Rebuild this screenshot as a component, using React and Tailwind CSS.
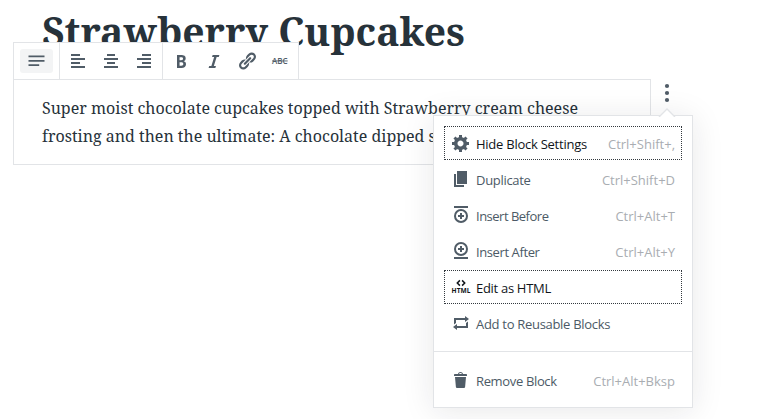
const ICONS = {
  left: 'M12 5V3H3v2h9zm5 4V7H3v2h14zm-5 4v-2H3v2h9zm5 4v-2H3v2h14z',
  center: 'M14 5V3H6v2h8zm3 4V7H3v2h14zm-3 4v-2H6v2h8zm3 4v-2H3v2h14z',
  right: 'M17 5V3H8v2h9zm0 4V7H3v2h14zm0 4v-2H8v2h9zm0 4v-2H3v2h14z',
  bold: 'M6 4v13h4.54c1.37 0 2.46-.33 3.26-1 .8-.66 1.2-1.58 1.2-2.77 0-.84-.17-1.51-.51-2.01s-.9-.85-1.67-1.03v-.09c.57-.1 1.02-.4 1.36-.9s.51-1.13.51-1.91c0-1.14-.39-1.98-1.17-2.5C12.75 4.26 11.5 4 9.78 4H6zm2.57 5.15V6.26h1.36c.73 0 1.27.11 1.61.32.34.22.51.58.51 1.07 0 .54-.16.92-.47 1.15s-.82.35-1.51.35h-1.5zm0 2.19h1.6c1.44 0 2.16.53 2.16 1.61 0 .6-.17 1.05-.51 1.34s-.86.43-1.57.43H8.57v-3.38z',
  italic: 'M14.78 6h-2.13l-2.8 9h2.12l-.62 2H4.6l.62-2h2.14l2.8-9H8.03l.62-2h6.75z',
  link: 'M17.74 2.76c1.68 1.69 1.68 4.41 0 6.1l-1.53 1.52c-1.12 1.12-2.7 1.47-4.14 1.09l2.62-2.61.76-.77.76-.76c.84-.84.84-2.2 0-3.04-.84-.85-2.2-.85-3.04 0l-.77.76-3.38 3.38c-.37-1.44-.02-3.02 1.1-4.14l1.52-1.53c1.69-1.68 4.42-1.68 6.1 0zM8.59 13.43l5.34-5.34c.42-.42.42-1.1 0-1.52-.44-.43-1.13-.39-1.53 0l-5.33 5.34c-.42.42-.42 1.1 0 1.52.44.43 1.13.39 1.52 0zm-.76 2.29l4.14-4.15c.38 1.44.03 3.02-1.09 4.14l-1.52 1.53c-1.69 1.68-4.41 1.68-6.1 0-1.68-1.68-1.68-4.42 0-6.1l1.53-1.52c1.12-1.12 2.7-1.47 4.14-1.1l-4.14 4.15c-.85.84-.85 2.2 0 3.05.84.84 2.2.84 3.04 0z',
  gear: 'M18 12h-2.18c-.17.7-.44 1.35-.81 1.93l1.54 1.54-2.1 2.1-1.54-1.54c-.58.36-1.23.63-1.91.79V19H8v-2.18c-.68-.16-1.33-.43-1.91-.79l-1.54 1.54-2.12-2.12 1.54-1.54c-.36-.58-.63-1.23-.79-1.91H1V9.03h2.17c.16-.7.44-1.35.8-1.94L2.43 5.55l2.1-2.1 1.54 1.54c.58-.37 1.24-.64 1.93-.81V2h3v2.18c.68.16 1.33.43 1.91.79l1.54-1.54 2.12 2.12-1.54 1.54c.36.59.64 1.24.8 1.94H18V12zm-8.5 1.5c1.66 0 3-1.34 3-3s-1.34-3-3-3-3 1.34-3 3 1.34 3 3 3z',
  page: 'M6 15V2h10v13H6zm-1 1h8v2H3V5h2v11z',
  repeat: 'M5 7v3l-2 1.5V5h11V3l4 3.01L14 9V7H5zm10 6v-3l2-1.5V15H6v2l-4-3.01L6 11v2h9z',
  trash: 'M12 4h3c.6 0 1 .4 1 1v1H3V5c0-.6.5-1 1-1h3c.2-1.1 1.3-2 2.5-2s2.3.9 2.5 2zM8 4h3c-.2-.6-.9-1-1.5-1S8.2 3.4 8 4zM4 7h11l-.9 10.1c0 .5-.5.9-1 .9H5.9c-.5 0-.9-.4-1-.9L4 7z',
};

function Icon({ name }) {
  const cls = 'block h-5 w-5 shrink-0 overflow-visible fill-current';
  if (name === 'strike')
    return (
      <svg viewBox="0 0 20 20" className={cls}>
        <text x="2" y="13" textLength="15.6" lengthAdjust="spacingAndGlyphs" className="font-['Open_Sans',sans-serif] text-[8.6px] font-semibold">ABC</text>
        <path d="M2 9.5h15.7v.9H2z" />
      </svg>
    );
  if (name === 'html')
    return (
      <svg viewBox="0 0 20 20" className={cls}>
        <path d="M8.9 3.4 6.3 6l2.6 2.6M11.1 3.4 13.7 6l-2.6 2.6" fill="none" stroke="currentColor" strokeWidth="1.5" />
        <text x="0.6" y="16" textLength="18.8" lengthAdjust="spacingAndGlyphs" className="font-['Open_Sans',sans-serif] text-[7.8px] font-bold">HTML</text>
      </svg>
    );
  if (name === 'before' || name === 'after') {
    const cy = name === 'before' ? 11 : 8;
    return (
      <svg viewBox="0 0 20 20" className={cls}>
        <rect x="3" y={name === 'before' ? 1 : 16} width="14" height="2" />
        <circle cx="10" cy={cy} r="6" fill="none" stroke="currentColor" strokeWidth="2" />
        <path d={`M7 ${cy}h6M10 ${cy - 3}v6`} stroke="currentColor" strokeWidth="2" />
      </svg>
    );
  }
  return (
    <svg viewBox="0 0 20 20" className={cls}>
      <path d={ICONS[name]} />
    </svg>
  );
}

function Group({ icons, className }) {
  return (
    <div className={`flex items-center border-r border-[#e2e4e7] pl-0.5 ${className}`}>
      {icons.map((name) => (
        <button key={name} className="flex h-6 w-[33px] items-center pl-1.5">
          <Icon name={name} />
        </button>
      ))}
    </div>
  );
}

function Item({ icon, label, shortcut, active, labelClass = '' }) {
  return (
    <button
      className={`flex h-[34px] w-full items-center border border-dotted pr-1.5 pl-1.5 text-left ${
        active ? 'border-[#33393f] text-[#10151a]' : 'border-transparent text-[#4c5a66]'
      }`}
    >
      <span className={icon === 'html' ? '' : 'text-[#505c67]'}>
        <Icon name={icon} />
      </span>
      <span className={`ml-[5px] grow pt-[3px] whitespace-nowrap ${labelClass}`}>{label}</span>
      <span className="pt-[3px] whitespace-nowrap text-[#a9adb2]">{shortcut}</span>
    </button>
  );
}

export default function App() {
  return (
    <div className="h-[419px] w-[765px] overflow-hidden bg-white font-['Open_Sans',sans-serif] text-[13px] text-[#505c67]">
      <h1 className="h-[42px] pl-[42px] font-['Noto_Serif','DejaVu_Serif',serif] text-[39px] leading-[62px] font-bold tracking-[0.03px] whitespace-nowrap text-[#27323a]">
        Strawberry Cupcakes
      </h1>
      <div className="relative ml-[13px] flex w-[680px]">
        <section className="w-[638px]">
          <div className="flex h-[37px] w-[286px] border-t border-l border-[#e2e4e7] bg-white">
            <div className="flex w-[46px] items-center border-r border-[#e2e4e7] pl-1.5">
              <button className="flex h-6 w-[33px] items-center justify-center rounded-[3px] bg-[#f3f4f5]">
                <svg viewBox="0 0 17 12" className="h-3 w-[17px] fill-current">
                  <path d="M.5 .4h16v1.8H.5zM.5 4.9h16v1.8H.5zM.5 9.3h10.7v1.8H.5z" />
                </svg>
              </button>
            </div>
            <Group icons={['left', 'center', 'right']} className="w-[103px]" />
            <Group icons={['bold', 'italic', 'link', 'strike']} className="w-[137px]" />
          </div>
          <div className="h-[86px] border border-[#e2e4e7] pt-[14px] pl-7 font-['Noto_Serif','DejaVu_Serif',serif] text-base leading-7 whitespace-nowrap text-[#27323a]">
            <p>Super moist chocolate cupcakes topped with Strawberry cream cheese</p>
            <p>frosting and then the ultimate: A chocolate dipped s</p>
          </div>
        </section>
        <svg viewBox="0 0 6 20" className="mt-[41px] ml-[13px] h-5 w-1.5 fill-current">
          <circle cx="3" cy="3" r="2.1" />
          <circle cx="3" cy="10" r="2.1" />
          <circle cx="3" cy="17" r="2.1" />
        </svg>
        <div className="absolute top-[73px] left-[420px] h-[293px] w-[260px] border border-[#e2e4e7] bg-white shadow-[0_3px_30px_rgba(25,30,35,0.1)]">
          <svg viewBox="0 0 18 9" className="absolute -top-[8px] left-[224px] h-[9px] w-[18px]">
            <path d="M1 9 9 1l8 8" fill="white" stroke="#e2e4e7" strokeWidth="1.4" />
          </svg>
          <div className="flex h-[236px] flex-col gap-0.5 border-b border-[#e2e4e7] px-2.5 pt-2.5">
            <Item icon="gear" label="Hide Block Settings" shortcut="Ctrl+Shift+," active labelClass="tracking-[-0.25px]" />
            <Item icon="page" label="Duplicate" shortcut="Ctrl+Shift+D" labelClass="tracking-[-0.3px]" />
            <Item icon="before" label="Insert Before" shortcut="Ctrl+Alt+T" labelClass="tracking-[-0.5px]" />
            <Item icon="after" label="Insert After" shortcut="Ctrl+Alt+Y" labelClass="tracking-[-0.4px]" />
            <Item icon="html" label="Edit as HTML" active labelClass="tracking-[-0.3px]" />
            <Item icon="repeat" label="Add to Reusable Blocks" labelClass="tracking-[-0.3px]" />
          </div>
          <div className="px-2.5 pt-[11px]">
            <Item icon="trash" label="Remove Block" shortcut="Ctrl+Alt+Bksp" labelClass="tracking-[-0.35px]" />
          </div>
        </div>
      </div>
    </div>
  );
}
